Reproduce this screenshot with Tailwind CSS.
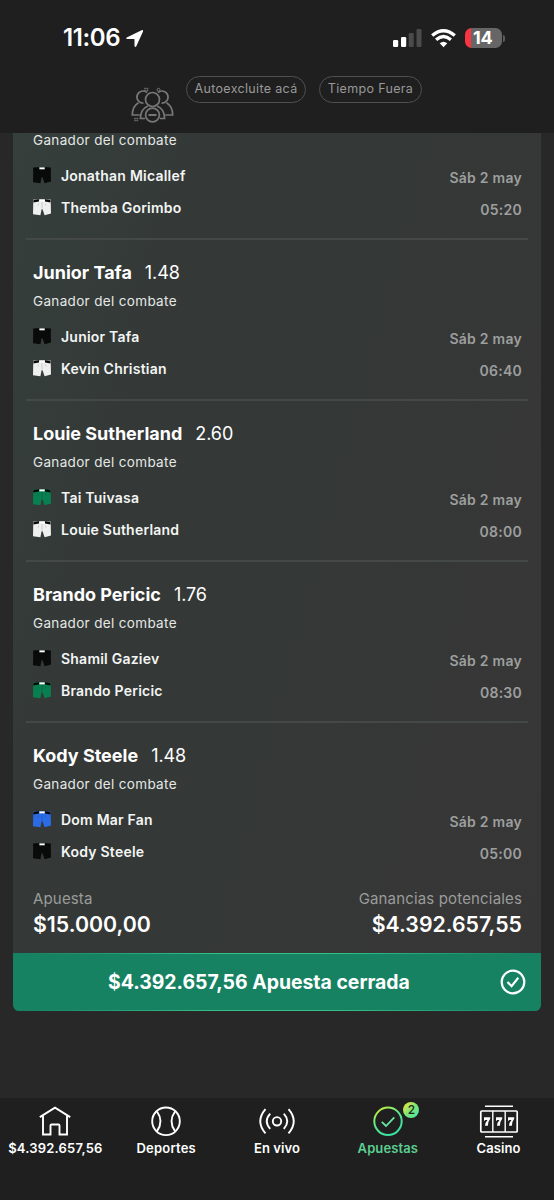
<!DOCTYPE html>
<html lang="es">
<head>
<meta charset="utf-8">
<meta name="viewport" content="width=device-width, initial-scale=1">
<title>Apuestas</title>
<script src="https://cdn.jsdelivr.net/npm/@tailwindcss/browser@4"></script>
</head>
<body class="bg-[#282828] font-['Inter',sans-serif] text-white">
<svg class="absolute size-0">
  <symbol id="shorts" viewBox="0 0 18 17" preserveAspectRatio="none">
    <path d="M.3 .6H17.7L18 14.400 11.600 16.300 9.500 10.200H8.600L7.400 16.300 0 15.200Z" fill="currentColor"/>
    <path d="M.5 1 6 .3V2.600L.4 3.400ZM12 .3 17.400 1 17.500 3.400 12 2.600Z" fill="#070909"/>
    <path d="M6.400 .4H11.700V2.300H6.400Z" fill="#fff"/>
    <path d="M9 3V9.500M5.600 4.500 5 6.500M12.400 4.500 13 6.500" stroke="#000" stroke-opacity=".22" stroke-width=".7" fill="none"/>
  </symbol>
  <linearGradient id="lime" x1="0" y1="0" x2=".6" y2="1"><stop offset="0" stop-color="#d9ef2f"/><stop offset=".5" stop-color="#5ee88a"/><stop offset="1" stop-color="#38e2a0"/></linearGradient>
</svg>
<div class="flex h-[1200px] w-[554px] flex-col overflow-hidden">
  <header class="h-[133px] shrink-0 bg-[#1f1f1f]">
    <div class="flex h-[76px] items-center pl-[63px] pr-[49px]">
      <span class="text-[24px] font-semibold leading-none tracking-[-0.400px]">11:06</span>
      <svg class="ml-[5px] size-[19px]" viewBox="0 0 19 19" fill="#fff"><path d="M1.700 8.600 16.600 1.200Q18.600.6 18 2.500L11.300 17.200Q10.200 18.900 9.500 17V10.400Q9.400 9.900 9 9.900H2Q.3 9.600 1.700 8.600Z"/></svg>
      <svg class="ml-auto h-[18px] w-[29px]" viewBox="0 0 29 18"><rect x="0" y="11" width="5.200" height="7" rx="1.300" fill="#fff"/><rect x="8" y="8" width="5.200" height="10" rx="1.300" fill="#fff"/><rect x="15.700" y="4" width="5" height="14" rx="1.300" fill="#4b4b4b"/><rect x="23.500" y="0" width="5" height="18" rx="1.300" fill="#4b4b4b"/></svg>
      <svg class="ml-[9px] h-[19px] w-[25px]" viewBox="0 0 25 19" fill="none" stroke="#fff" stroke-width="3.300"><path d="M1.200 6.600Q12.500-3.100 23.800 6.600M5.100 10.700Q12.500 4.400 19.900 10.700"/><path d="M12.500 18.300 8.700 14.300Q12.500 11.200 16.300 14.300Z" fill="#fff" stroke="none"/></svg>
      <div class="ml-[9px] flex h-[20px] w-[37px] items-center overflow-hidden rounded-[6.500px] bg-gradient-to-r from-[#fb3442] from-[17%] to-[#666] to-[17%]"><span class="ml-[8px] text-[18px] font-bold leading-none tracking-[-0.300px]">14</span></div>
      <span class="ml-[1px] h-[7px] w-[2px] rounded-r-full bg-[#5b5b5b]"></span>
    </div>
    <div class="flex pl-[131px]">
      <svg class="mt-[9px] h-[38px] w-[43px]" viewBox="0 0 43 38" fill="none" stroke="#777" stroke-width="1.700"><circle cx="21.500" cy="14.500" r="7"/><path d="M16 7.600A6 6 0 1 0 12.500 18M27 7.600A6 6 0 1 1 30.500 18M7.500 17.700C3.500 20 1.300 24 1.300 30H8.600M35.500 17.700C39.500 20 41.700 24 41.700 30H34.400M17 21C12 23 9.400 26.500 9.400 33.500H14M26 21C31 23 33.600 26.500 33.600 33.500H29"/><circle cx="21.500" cy="30" r="6.900"/><path d="M17.500 30H25.500" stroke-width="2"/><circle cx="27.500" cy="4.800" r="1.500" stroke-width="1"/><path d="M14 2.500V6.500M16.500 2.500V6.500M13 3.500H17.500M13 5.600H17.500M4 32.500V36.500M6.300 32.500V36.500M3 33.500H7.300M3 35.600H7.300" stroke-width=".6"/></svg>
      <div class="ml-[12px] flex h-[27px] w-[120px] items-center justify-center rounded-full border border-[#505050] text-[12.500px] tracking-[0.330px] whitespace-nowrap text-[#999]">Autoexcluite acá</div>
      <div class="ml-[13px] flex h-[27px] w-[103px] items-center justify-center rounded-full border border-[#505050] text-[12.500px] tracking-[0.330px] whitespace-nowrap text-[#999]">Tiempo Fuera</div>
    </div>
  </header>

  <main class="h-[965px] shrink-0 px-[13px]">
    <div class="h-[820px] bg-[linear-gradient(105deg,#353f3b_0%,#343937_25%,#343837_55%,#363736_80%,#363636_100%)] px-[13px]">
      <section class="flex h-[107px] flex-col border-b-2 border-[#444947] px-[7px]">
        <p class="-mt-[3px] text-[13.500px] leading-[20px] tracking-[0.340px] text-[#e4e8e6]">Ganador del combate</p>
        <div class="mt-[9.500px] flex justify-between text-[14px] font-semibold leading-[32px] tracking-[0.220px]">
          <div class="text-[#f3f5f4]">
            <div class="flex items-center gap-[10px]"><svg class="h-[17px] w-[18px] text-[#090b0b]"><use href="#shorts"/></svg>Jonathan Micallef</div>
            <div class="flex items-center gap-[10px]"><svg class="h-[17px] w-[18px] text-[#eeefee]"><use href="#shorts"/></svg>Themba Gorimbo</div>
          </div>
          <div class="-mr-[1px] mt-[2.500px] text-right tracking-[0.250px] text-[#9d9f9e]"><div>Sáb 2 may</div><div>05:20</div></div>
        </div>
      </section>
      <section class="h-[161px] border-b-2 border-[#444947] px-[7px] pt-[21px]">
        <h2 class="flex gap-[13px] text-[18px] leading-[24px]"><span class="font-bold">Junior Tafa</span><span class="tracking-[-0.100px]">1.48</span></h2>
        <p class="mt-[6px] text-[13.500px] leading-[20px] tracking-[0.340px] text-[#e4e8e6]">Ganador del combate</p>
        <div class="mt-[9.500px] flex justify-between text-[14px] font-semibold leading-[32px] tracking-[0.220px]">
          <div class="text-[#f3f5f4]">
            <div class="flex items-center gap-[10px]"><svg class="h-[17px] w-[18px] text-[#090b0b]"><use href="#shorts"/></svg>Junior Tafa</div>
            <div class="flex items-center gap-[10px]"><svg class="h-[17px] w-[18px] text-[#eeefee]"><use href="#shorts"/></svg>Kevin Christian</div>
          </div>
          <div class="-mr-[1px] mt-[2.500px] text-right tracking-[0.250px] text-[#9d9f9e]"><div>Sáb 2 may</div><div>06:40</div></div>
        </div>
      </section>
      <section class="h-[161px] border-b-2 border-[#444947] px-[7px] pt-[21px]">
        <h2 class="flex gap-[13px] text-[18px] leading-[24px]"><span class="font-bold">Louie Sutherland</span><span class="tracking-[-0.100px]">2.60</span></h2>
        <p class="mt-[6px] text-[13.500px] leading-[20px] tracking-[0.340px] text-[#e4e8e6]">Ganador del combate</p>
        <div class="mt-[9.500px] flex justify-between text-[14px] font-semibold leading-[32px] tracking-[0.220px]">
          <div class="text-[#f3f5f4]">
            <div class="flex items-center gap-[10px]"><svg class="h-[17px] w-[18px] text-[#087f50]"><use href="#shorts"/></svg>Tai Tuivasa</div>
            <div class="flex items-center gap-[10px]"><svg class="h-[17px] w-[18px] text-[#eeefee]"><use href="#shorts"/></svg>Louie Sutherland</div>
          </div>
          <div class="-mr-[1px] mt-[2.500px] text-right tracking-[0.250px] text-[#9d9f9e]"><div>Sáb 2 may</div><div>08:00</div></div>
        </div>
      </section>
      <section class="h-[161px] border-b-2 border-[#444947] px-[7px] pt-[21px]">
        <h2 class="flex gap-[13px] text-[18px] leading-[24px]"><span class="font-bold">Brando Pericic</span><span class="tracking-[-0.100px]">1.76</span></h2>
        <p class="mt-[6px] text-[13.500px] leading-[20px] tracking-[0.340px] text-[#e4e8e6]">Ganador del combate</p>
        <div class="mt-[9.500px] flex justify-between text-[14px] font-semibold leading-[32px] tracking-[0.220px]">
          <div class="text-[#f3f5f4]">
            <div class="flex items-center gap-[10px]"><svg class="h-[17px] w-[18px] text-[#090b0b]"><use href="#shorts"/></svg>Shamil Gaziev</div>
            <div class="flex items-center gap-[10px]"><svg class="h-[17px] w-[18px] text-[#087f50]"><use href="#shorts"/></svg>Brando Pericic</div>
          </div>
          <div class="-mr-[1px] mt-[2.500px] text-right tracking-[0.250px] text-[#9d9f9e]"><div>Sáb 2 may</div><div>08:30</div></div>
        </div>
      </section>
      <section class="px-[7px] pt-[21px]">
        <h2 class="flex gap-[13px] text-[18px] leading-[24px]"><span class="font-bold">Kody Steele</span><span class="tracking-[-0.100px]">1.48</span></h2>
        <p class="mt-[6px] text-[13.500px] leading-[20px] tracking-[0.340px] text-[#e4e8e6]">Ganador del combate</p>
        <div class="mt-[9.500px] flex justify-between text-[14px] font-semibold leading-[32px] tracking-[0.220px]">
          <div class="text-[#f3f5f4]">
            <div class="flex items-center gap-[10px]"><svg class="h-[17px] w-[18px] text-[#2b6ce6]"><use href="#shorts"/></svg>Dom Mar Fan</div>
            <div class="flex items-center gap-[10px]"><svg class="h-[17px] w-[18px] text-[#090b0b]"><use href="#shorts"/></svg>Kody Steele</div>
          </div>
          <div class="-mr-[1px] mt-[2.500px] text-right tracking-[0.250px] text-[#9d9f9e]"><div>Sáb 2 may</div><div>05:00</div></div>
        </div>
        <div class="mt-[17px] flex justify-between">
          <div><p class="text-[15px] leading-[24px] tracking-[0.160px] text-[#9a9c9b]">Apuesta</p><p class="text-[21.300px] font-semibold leading-[26px]">$15.000,00</p></div>
          <div class="-mr-[1px] text-right"><p class="text-[15px] leading-[24px] tracking-[0.160px] text-[#9a9c9b]">Ganancias potenciales</p><p class="text-[21.300px] font-semibold leading-[26px]">$4.392.657,55</p></div>
        </div>
      </section>
    </div>
    <div class="flex h-[58px] flex-col overflow-hidden rounded-b-[6px] bg-[#168262]">
      <div class="h-[1px] bg-[linear-gradient(90deg,#168262_2%,#35c28a_40%,#35c28a_60%,#168262_98%)]"></div>
      <div class="flex h-[56px] items-center pl-[95px] pr-[15px]">
        <span class="mt-[1px] text-[19.400px] font-bold whitespace-nowrap">$4.392.657,56 Apuesta cerrada</span>
        <svg class="ml-auto size-[26px] shrink-0" viewBox="0 0 26 26" fill="none" stroke="#fff" stroke-width="2.200"><circle cx="13" cy="13" r="11.300"/><path d="M7.500 13 11.600 17.200 18.300 8.800"/></svg>
      </div>
      <div class="h-[1px] bg-[linear-gradient(90deg,#168262_2%,#35c28a_40%,#35c28a_60%,#168262_98%)]"></div>
    </div>
  </main>

  <nav class="grid h-[102px] grid-cols-5 bg-[#1f1f1f] pt-[7px] text-center text-[13px] font-semibold">
    <a class="flex flex-col items-center">
      <svg class="h-[33px] w-[34px]" viewBox="0 0 34 33" fill="none" stroke="#fff" stroke-width="1.900"><path d="M1.800 12.100 17 2.600 32.200 12.100M5 11V29.500H12.500V20.500Q12.500 19.500 13.500 19.500H20.500Q21.500 19.500 21.500 20.500V29.500H29V11"/></svg>
      <span class="leading-[20px] tracking-[0.200px]">$4.392.657,56</span>
    </a>
    <a class="flex flex-col items-center">
      <svg class="h-[33px] w-[34px]" viewBox="0 0 34 33" fill="none" stroke="#fff" stroke-width="1.900"><circle cx="17" cy="16.300" r="13.800"/><path d="M8 6.500Q15 16.300 8 26.100M26 6.500Q19 16.300 26 26.100"/></svg>
      <span class="leading-[20px] tracking-[0.200px]">Deportes</span>
    </a>
    <a class="flex flex-col items-center">
      <svg class="h-[33px] w-[36px]" viewBox="0 0 36 33" fill="none" stroke="#fff" stroke-width="1.900"><circle cx="18" cy="16.300" r="4.200"/><path d="M6.500 4.200Q-4 16.300 6.500 28.400M11.200 8.700Q4.300 16.300 11.200 23.900M29.500 4.200Q40 16.300 29.500 28.400M24.800 8.700Q31.700 16.300 24.800 23.900"/></svg>
      <span class="leading-[20px] tracking-[0.100px]">En vivo</span>
    </a>
    <a class="relative flex flex-col items-center text-[#5bcf91]">
      <svg class="h-[33px] w-[34px]" viewBox="0 0 34 33" fill="none" stroke="url(#lime)"><circle cx="17" cy="16.300" r="13.700" stroke-width="2"/><path d="M10.800 16.800 15 21 23.300 12.300" stroke="#66e8a0" stroke-width="1.800"/></svg>
      <span class="leading-[20px] tracking-[0.100px]">Apuestas</span>
      <span class="absolute left-[71px] -top-[3px] flex size-[16px] items-center justify-center rounded-full bg-gradient-to-br from-[#f2e524] via-[#7ce573] to-[#30e7aa] text-[12px] font-medium leading-none text-[#1f1f1f]">2</span>
    </a>
    <a class="flex flex-col items-center">
      <svg class="h-[33px] w-[40px]" viewBox="0 0 40 33" fill="none" stroke="#fff" stroke-width="1.700"><path d="M6 1.200H34M6 31.800H34" stroke-width="1.400"/><rect x="1.800" y="6" width="36.400" height="21" rx="1"/><path d="M13.800 6V27M26.200 6V27" stroke-width="1.400"/><path id="seven" d="M5 12.300H11.200V13.700Q8.900 16.500 8.900 20.700H6Q6.100 17.600 8.500 15H6.100L5 16.300Z" fill="#fff" stroke="none"/><use href="#seven" x="12"/><use href="#seven" x="24"/></svg>
      <span class="leading-[20px] tracking-[0.100px]">Casino</span>
    </a>
  </nav>
</div>
</body>
</html>
